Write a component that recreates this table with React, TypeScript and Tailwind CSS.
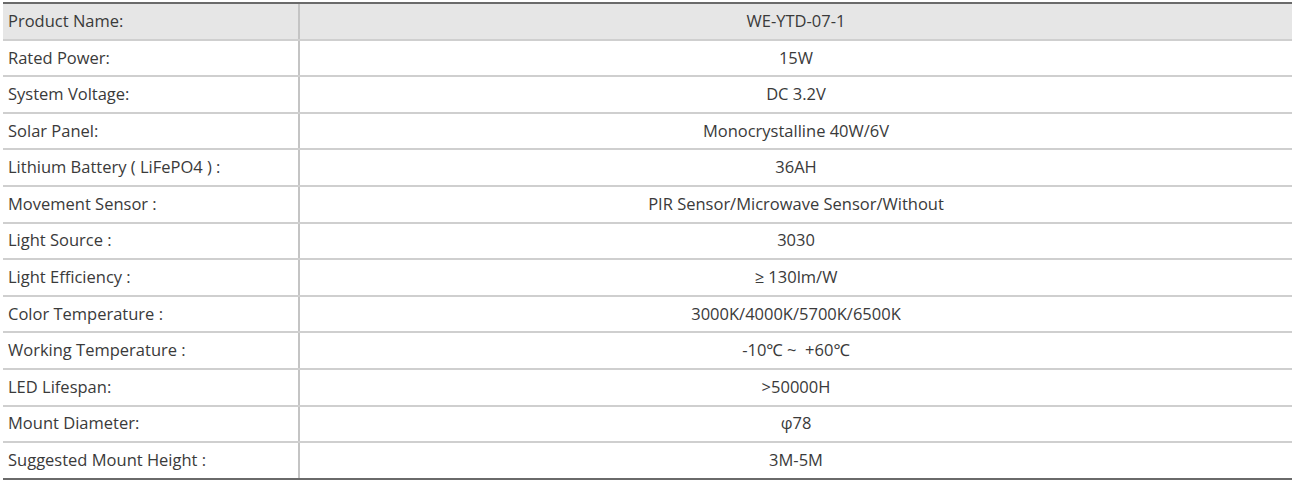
import React from "react";

const rows: [string, string][] = [
  ["Product Name:", "WE-YTD-07-1"],
  ["Rated Power:", "15W"],
  ["System Voltage:", "DC 3.2V"],
  ["Solar Panel:", "Monocrystalline 40W/6V"],
  ["Lithium Battery ( LiFePO4 ) :", "36AH"],
  ["Movement Sensor :", "PIR Sensor/Microwave Sensor/Without"],
  ["Light Source :", "3030"],
  ["Light Efficiency :", "≥ 130lm/W"],
  ["Color Temperature :", "3000K/4000K/5700K/6500K"],
  ["Working Temperature :", "-10℃ ~  +60℃"],
  ["LED Lifespan:", ">50000H"],
  ["Mount Diameter:", "φ78"],
  ["Suggested Mount Height :", "3M-5M"],
];

export default function App() {
  return (
    <div className="bg-white w-[1297px] h-[483px] pt-[2px] pl-[3px]" style={{ fontFamily: '"Open Sans", "Noto Sans", sans-serif' }}>
      <div className="w-[1289px] border-t-2 border-b-2 border-[#6a6a6a]">
        {rows.map(([k, v], i) => (
          <div
            key={i}
            className={`grid grid-cols-[297px_1fr] text-[16.5px] text-[#3a3a3a] ${i === 0 ? "bg-[#e6e6e6]" : "bg-white"} ${i < rows.length - 1 ? "h-[36.6px] border-b-2 border-[#cfcfcf]" : "h-[35px]"}`}
          >
            <div className="flex items-center pl-[5px] border-r-2 border-[#c4c4c4] whitespace-pre">{k}</div>
            <div className="flex items-center justify-center whitespace-pre">{v}</div>
          </div>
        ))}
      </div>
    </div>
  );
}
